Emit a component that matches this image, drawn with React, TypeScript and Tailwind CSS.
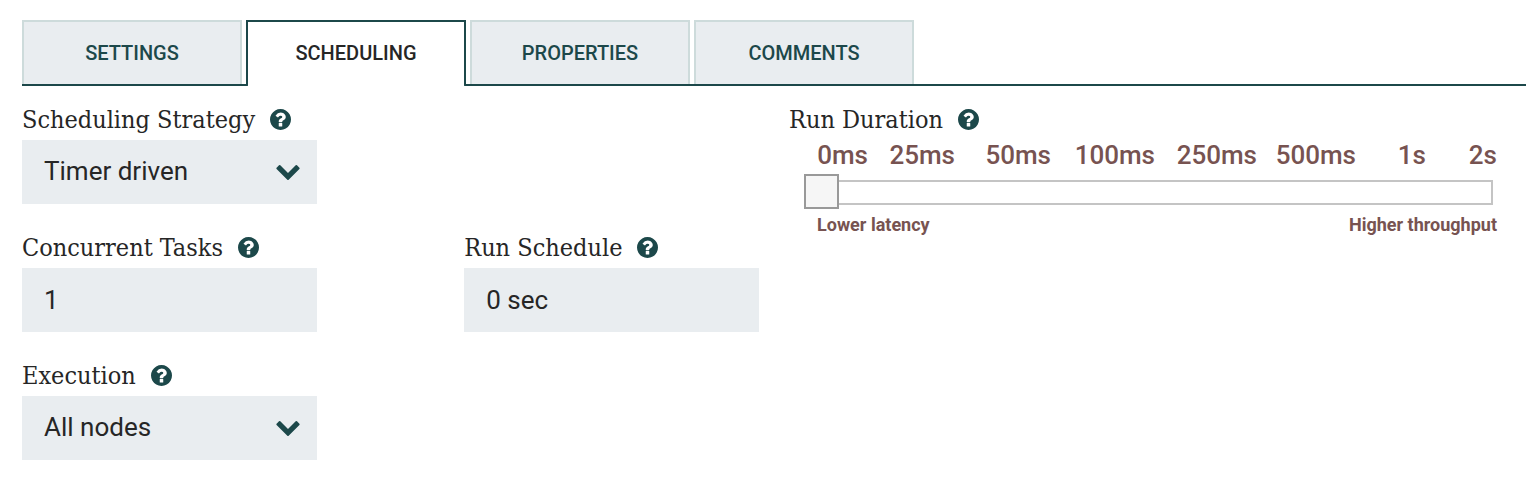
import React, { useState } from 'react';

const tabs = ['Settings', 'Scheduling', 'Properties', 'Comments'];

const durations = ['0ms', '25ms', '50ms', '100ms', '250ms', '500ms', '1s', '2s'];

const HelpIcon = () => (
  <svg className="h-[21px] w-[21px] shrink-0 text-[#1c484a]" viewBox="128 128 1536 1536" fill="currentColor">
    <path d="M1024 1376v-192q0-14-9-23t-23-9h-192q-14 0-23 9t-9 23v192q0 14 9 23t23 9h192q14 0 23-9t9-23zm256-672q0-88-55.5-163t-138.5-116-170-41q-243 0-371 213-15 24 8 42l132 100q7 6 19 6 16 0 25-12 53-68 86-92 34-24 86-24 48 0 85.5 26t37.5 59q0 38-20 61t-68 45q-63 28-115.5 86.5t-52.5 125.5v36q0 14 9 23t23 9h192q14 0 23-9t9-23q0-19 21.5-49.500t54.500-49.500q32-18 49-28.5t46-35 44.500-48 28-60.500 12.500-81zm384 192q0 209-103 385.500t-279.500 279.500-385.500 103-385.500-103-279.500-279.500-103-385.500 103-385.500 279.500-279.500 385.500-103 385.500 103 279.500 279.500 103 385.500z" />
  </svg>
);

const ChevronIcon = () => (
  <svg
    className="pointer-events-none absolute top-[25px] right-[17px] h-[15px] w-6 text-[#1c484a]"
    viewBox="90 533 1612 1035"
    fill="currentColor"
  >
    <path d="M1683 808l-742 741q-19 19-45 19t-45-19l-742-741q-19-19-19-45.5t19-45.5l166-165q19-19 45-19t45 19l531 531 531-531q19-19 45-19t45 19l166 165q19 19 19 45.5t-19 45.5z" />
  </svg>
);

const FieldLabel = ({ htmlFor, text }: { htmlFor: string; text: string }) => (
  <div className="flex h-10 items-center gap-[15px] pb-px">
    <label
      htmlFor={htmlFor}
      className="whitespace-nowrap font-['DejaVu_Serif_Condensed','DejaVu_Serif',serif] text-[25px] leading-[33px]"
    >
      {text}
    </label>
    <HelpIcon />
  </div>
);

const SelectField = ({ id, label, options }: { id: string; label: string; options: string[] }) => (
  <div className="w-2/5">
    <FieldLabel htmlFor={id} text={label} />
    <div className="relative">
      <select
        id={id}
        className="h-16 w-full appearance-none bg-[#e9edf0] px-[22px] pb-0.5 text-[26px] outline-none"
      >
        {options.map((option) => (
          <option key={option}>{option}</option>
        ))}
      </select>
      <ChevronIcon />
    </div>
  </div>
);

const TextField = ({ id, label, initial }: { id: string; label: string; initial: string }) => {
  const [value, setValue] = useState(initial);

  return (
    <div className="w-2/5">
      <FieldLabel htmlFor={id} text={label} />
      <input
        id={id}
        type="text"
        value={value}
        onChange={(e) => setValue(e.target.value)}
        className="block h-16 w-full bg-[#e9edf0] px-[22px] text-[26px] outline-none"
      />
    </div>
  );
};

const RunDuration = () => {
  const [step, setStep] = useState(0);

  return (
    <div>
      <FieldLabel htmlFor="run-duration" text="Run Duration" />
      <div className="pr-[29px] pl-7 text-[#775351]">
        <div className="grid grid-cols-[51fr_87fr_96fr_104fr_102fr_99fr_70fr_71fr] text-right text-[26px] leading-[30px] font-medium">
          {durations.map((duration) => (
            <span key={duration}>{duration}</span>
          ))}
        </div>
      </div>
      <div className="mt-[5px] pr-[33px] pl-[15px]">
        <input
          id="run-duration"
          type="range"
          min={0}
          max={durations.length - 1}
          value={step}
          onChange={(e) => setStep(Number(e.target.value))}
          className="block h-[35px] w-full cursor-pointer appearance-none bg-transparent outline-none [&::-webkit-slider-runnable-track]:h-[25px] [&::-webkit-slider-runnable-track]:shadow-[inset_0_0_0_2px_#c4c4c4] [&::-webkit-slider-thumb]:-mt-[6px] [&::-webkit-slider-thumb]:box-border [&::-webkit-slider-thumb]:h-[35px] [&::-webkit-slider-thumb]:w-[35px] [&::-webkit-slider-thumb]:appearance-none [&::-webkit-slider-thumb]:border-2 [&::-webkit-slider-thumb]:border-[#999999] [&::-webkit-slider-thumb]:bg-[#f6f6f6]"
        />
      </div>
      <div className="mt-[3px] flex justify-between pr-[29px] pl-7 text-[18px] leading-6 font-bold text-[#775351]">
        <span>Lower latency</span>
        <span>Higher throughput</span>
      </div>
    </div>
  );
};

const App = () => {
  const [activeTab, setActiveTab] = useState('Scheduling');

  return (
    <div className="min-h-screen bg-white pt-5 pr-[10px] pl-[22px] font-[Roboto,sans-serif] text-[#262626]">
      <div role="tablist" className="flex gap-1 border-b-2 border-[#1c484a]">
        {tabs.map((tab) => (
          <button
            key={tab}
            role="tab"
            aria-selected={tab === activeTab}
            onClick={() => setActiveTab(tab)}
            className={`w-[220px] border-2 border-b-0 text-[20px] font-medium uppercase ${
              tab === activeTab
                ? '-mb-0.5 h-[66px] rounded-b-xs border-[#1c484a] bg-white pb-0.5'
                : 'h-16 border-[#cddbdb] bg-[#e9edf0] text-[#1c484a]'
            }`}
          >
            {tab}
          </button>
        ))}
      </div>

      <div className="mt-[14px] grid grid-cols-2 gap-[30px]">
        <div className="flex flex-col gap-6">
          <SelectField
            id="scheduling-strategy"
            label="Scheduling Strategy"
            options={['Timer driven', 'CRON driven']}
          />
          <div className="flex justify-between">
            <TextField id="concurrent-tasks" label="Concurrent Tasks" initial="1" />
            <TextField id="run-schedule" label="Run Schedule" initial="0 sec" />
          </div>
          <SelectField id="execution" label="Execution" options={['All nodes', 'Primary node']} />
        </div>
        <RunDuration />
      </div>
    </div>
  );
};

export default App;
